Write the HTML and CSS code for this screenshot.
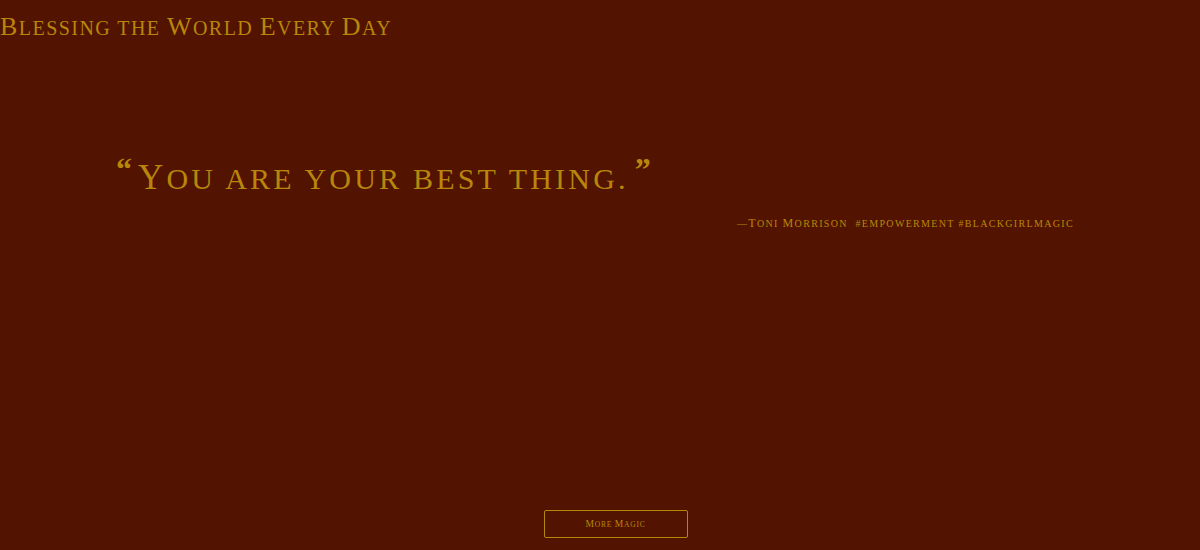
FILE: index.html
```html
<!DOCTYPE html>
<html>
<head>
<meta charset="utf-8">
<link rel="stylesheet" href="styles.css">
</head>
<body>
<div class="page">
  <h1 class="site-title"><span class="cap">B</span>lessing the <span class="cap">W</span>orld <span class="cap">E</span>very <span class="cap">D</span>ay</h1>
  <section class="quote">
    <blockquote class="quote-text"><span class="mark open">“</span><span class="cap">Y</span>ou are your best thing.<span class="mark close">”</span></blockquote>
    <p class="attribution">—<span class="cap">T</span>oni <span class="cap">M</span>orrison &nbsp;#empowerment #blackgirlmagic</p>
  </section>
  <div class="actions">
    <button class="more"><span class="cap">M</span>ore <span class="cap">M</span>agic</button>
  </div>
</div>
</body>
</html>
```
FILE: styles.css
```css
html, body {
  margin: 0;
  padding: 0;
  background: #521400;
}
body {
  font-family: "Liberation Serif", "DejaVu Serif", serif;
  color: #b8860b;
}
.page {
  height: 550px;
  display: flex;
  flex-direction: column;
}
.site-title {
  margin: 0;
  padding-top: 11px;
  font-size: 20px;
  font-weight: normal;
  text-transform: uppercase;
  letter-spacing: 1.45px;
  line-height: 32px;
}
.site-title .cap { font-size: 26px; }
.quote {
  padding: 105px 0 0 116px;
  width: 960px;
}
.quote-text {
  margin: 0;
  font-size: 30px;
  line-height: 40px;
  letter-spacing: 3.2px;
  text-transform: uppercase;
}
.quote-text .cap { font-size: 35px; }
.mark {
  font-size: 32px;
  font-weight: bold;
  letter-spacing: 0;
  vertical-align: 9px;
}
.mark.open { margin-right: 6px; }
.mark.close { margin-left: 6px; }
.attribution {
  margin: 17px 0 0 621px;
  font-size: 10px;
  letter-spacing: 1.33px;
  text-transform: uppercase;
}
.attribution .cap { font-size: 12px; }
.actions {
  margin-top: auto;
  padding: 0 0 12px 31px;
  display: flex;
  justify-content: center;
}
.more {
  width: 144px;
  height: 28px;
  padding: 0;
  background: transparent;
  border: 1px solid #b8860b;
  border-radius: 2px;
  color: #b8860b;
  font-family: "Liberation Serif", "DejaVu Serif", serif;
  text-transform: uppercase;
  font-size: 7.5px;
  letter-spacing: 0.8px;
  cursor: pointer;
}
.more .cap { font-size: 9.5px; }
```
